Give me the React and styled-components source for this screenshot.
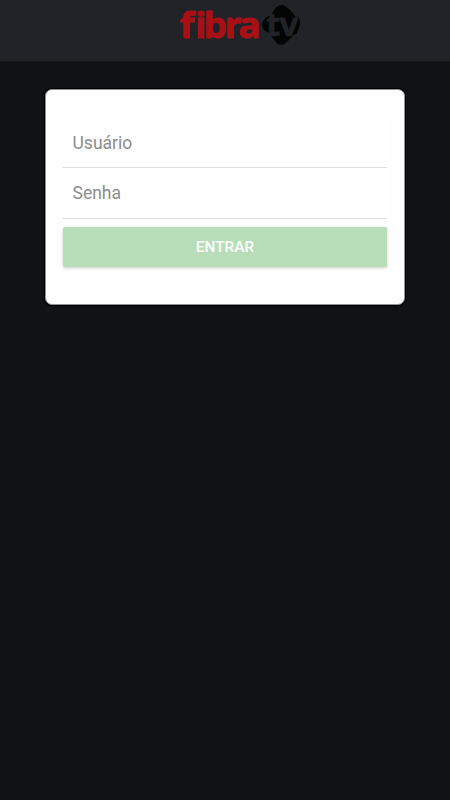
import React from 'react'
import styled, { createGlobalStyle } from 'styled-components'

const GlobalStyle = createGlobalStyle`
  body {
    margin: 0;
    background: #111214;
    font-family: Roboto, sans-serif;
  }
  * {
    box-sizing: border-box;
  }
`

const Page = styled.div`
  min-height: 100vh;
`

const Header = styled.header`
  height: 61px;
  padding-left: 30px;
  display: flex;
  justify-content: center;
  background: #202428;
`

const Card = styled.form`
  width: 360px;
  height: 216px;
  margin: 28px auto 0;
  padding: 28px 17px 0;
  background: #fefefe;
  border: 1px solid #929292;
  border-radius: 7px;
  box-shadow: 0 0 1px 1px #000;
`

const Field = styled.input`
  display: block;
  width: 100%;
  height: ${props => props.height}px;
  padding: 0 9.5px;
  border: 0;
  border-bottom: 1px solid #dedede;
  border-radius: 0;
  outline: none;
  background: #fff;
  color: #333;
  font: 400 17.5px Roboto, sans-serif;

  &::placeholder {
    color: #8c8c8c;
    opacity: 1;
  }
`

const Button = styled.button`
  display: block;
  width: 100%;
  height: 40px;
  margin-top: 8px;
  padding: 0 0 1px;
  border: 0;
  border-radius: 2px;
  background: #b7deb8;
  color: #fff;
  font: 500 15.4px Roboto, sans-serif;
  text-transform: uppercase;
  box-shadow: 0 1px 3px rgba(0, 0, 0, 0.2);
`

const LogoSvg = styled.svg`
  flex: none;
  overflow: visible;

  text {
    font-family: 'Open Sans', sans-serif;
    font-weight: 700;
    font-variant-ligatures: none;
  }
`

const Logo = () => (
  <LogoSvg width="124" height="60" viewBox="178 0 124 60">
    <text
      transform="translate(179.8 37.8) scale(1.02 1)"
      x="0 15 23.2 43.8 57.2"
      y="0"
      fill="#a81015"
      stroke="#a81015"
      strokeWidth="0.9"
      fontSize="36.5"
    >
      fibra
    </text>
    <g fill="#030404">
      <path d="M271.5 17 Q272 12 276 7.5 Q281 2 287 7.5 Q293 12 295.5 17 V33 L289 40 Q281 49 275 41 L271.5 36Z" />
      <path d="M270 15.5 V33 Q262 31 262 24 Q263 18 270 15.5Z" />
      <path d="M298.5 16 Q302 24 296.5 34 L292 35Z" />
    </g>
    <text
      x="266 279.5"
      y="36"
      fill="#202428"
      stroke="#202428"
      strokeWidth="0.5"
      fontSize="33"
    >
      tv
    </text>
  </LogoSvg>
)

export default () => (
  <Page>
    <GlobalStyle />
    <Header>
      <Logo />
    </Header>
    <Card>
      <Field type="text" placeholder="Usuário" height={50} />
      <Field type="password" placeholder="Senha" height={51} />
      <Button type="button">Entrar</Button>
    </Card>
  </Page>
)
